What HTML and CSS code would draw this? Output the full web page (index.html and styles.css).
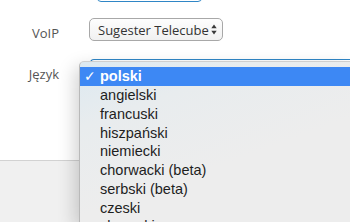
FILE: index.html
```html
<!DOCTYPE html>
<html lang="pl">

<head>
    <meta charset="UTF-8">
    <meta name="viewport" content="width=device-width, initial-scale=1.0">
    <title>Ustawienia</title>
    <link rel="stylesheet" href="styles.css">
</head>

<body>
    <div class="modal-body">
        <div class="field field-prev">
            <div class="field-label"></div>
            <div class="input-stub"></div>
        </div>
        <div class="field field-voip">
            <label class="field-label">VoIP</label>
            <div class="select-box">
                <span>Sugester Telecube</span>
                <svg class="select-arrows" width="6" height="11" viewBox="0 0 6 11">
                    <path d="M3 0.5L5.7 4.2H0.3z M3 10.5L5.7 6.8H0.3z" fill="#3a3a3a" />
                </svg>
            </div>
        </div>
        <div class="field field-lang">
            <label class="field-label">Język</label>
            <div class="select-open"></div>
        </div>
    </div>
    <div class="modal-footer"></div>

    <ul class="lang-menu">
        <li class="selected"><span class="check">✓</span>polski</li>
        <li>angielski</li>
        <li>francuski</li>
        <li>hiszpański</li>
        <li>niemiecki</li>
        <li>chorwacki (beta)</li>
        <li>serbski (beta)</li>
        <li>czeski</li>
        <li>słowacki</li>
    </ul>
</body>

</html>
```

FILE: styles.css
```css
body {
    margin: 0;
    padding: 0;
    width: 350px;
    height: 222px;
    overflow: hidden;
    background: #fff;
    font-family: "Open Sans", "Liberation Sans", Arial, sans-serif;
    font-size: 13px;
    color: #555;
    position: relative;
}

.modal-body {
    height: 161px;
    border-bottom: 1px solid #d2d2d2;
    box-sizing: border-box;
    overflow: hidden;
}

.field {
    display: flex;
    align-items: flex-start;
    gap: 29px;
}

.field-label {
    width: 60px;
    flex: none;
    text-align: right;
    line-height: 18px;
    padding-top: 6px;
    box-sizing: border-box;
    padding-right: 1px;
}

.field-prev {
    margin-top: -22px;
}

.input-stub {
    width: 105px;
    height: 24px;
    margin-left: 8px;
    border: 1px solid #2f86c6;
    border-radius: 4px;
    box-sizing: border-box;
}

.field-voip {
    margin-top: 16px;
}

.select-box {
    width: 134px;
    height: 23px;
    box-sizing: border-box;
    border: 1px solid #a8a8a8;
    border-radius: 5px;
    background: linear-gradient(#fdfdfd, #f1f1f1);
    display: flex;
    align-items: center;
    justify-content: space-between;
    padding: 0 5px 0 8px;
    color: #333;
    line-height: 20px;
}

.select-arrows {
    display: block;
}

.field-lang {
    margin-top: 17px;
}

.select-open {
    flex: 1;
    height: 30px;
    margin-left: 1px;
    border: 1px solid #2f86c6;
    border-right: none;
    border-radius: 4px 0 0 4px;
}

.modal-footer {
    height: 61px;
    background: #f0f0f0;
}

.lang-menu {
    position: absolute;
    left: 79px;
    top: 61px;
    right: 0;
    bottom: 0;
    overflow: hidden;
    margin: 0;
    padding: 5px 0 0;
    list-style: none;
    background: linear-gradient(160deg, #dce9f1 0%, #e8ecee 25%, #ededed 60%);
    border-top: 1px solid #cfcfcf;
    border-left: 1px solid #b9b9b9;
    border-top-left-radius: 5px;
    box-shadow: -4px 6px 18px rgba(0, 0, 0, 0.18);
    font-family: "Liberation Sans", Arial, sans-serif;
    font-size: 14.5px;
    color: #1e1e1e;
    box-sizing: border-box;
}

.lang-menu li {
    height: 18.75px;
    line-height: 18.75px;
    padding-left: 20px;
    position: relative;
    white-space: nowrap;
}

.lang-menu li.selected {
    background: #3d88f4;
    color: #fff;
    font-weight: bold;
    height: 19px;
    line-height: 19px;
}

.check {
    position: absolute;
    left: 4px;
    top: 0;
    font-family: "DejaVu Sans", sans-serif;
    font-size: 14px;
    font-weight: bold;
}
```
